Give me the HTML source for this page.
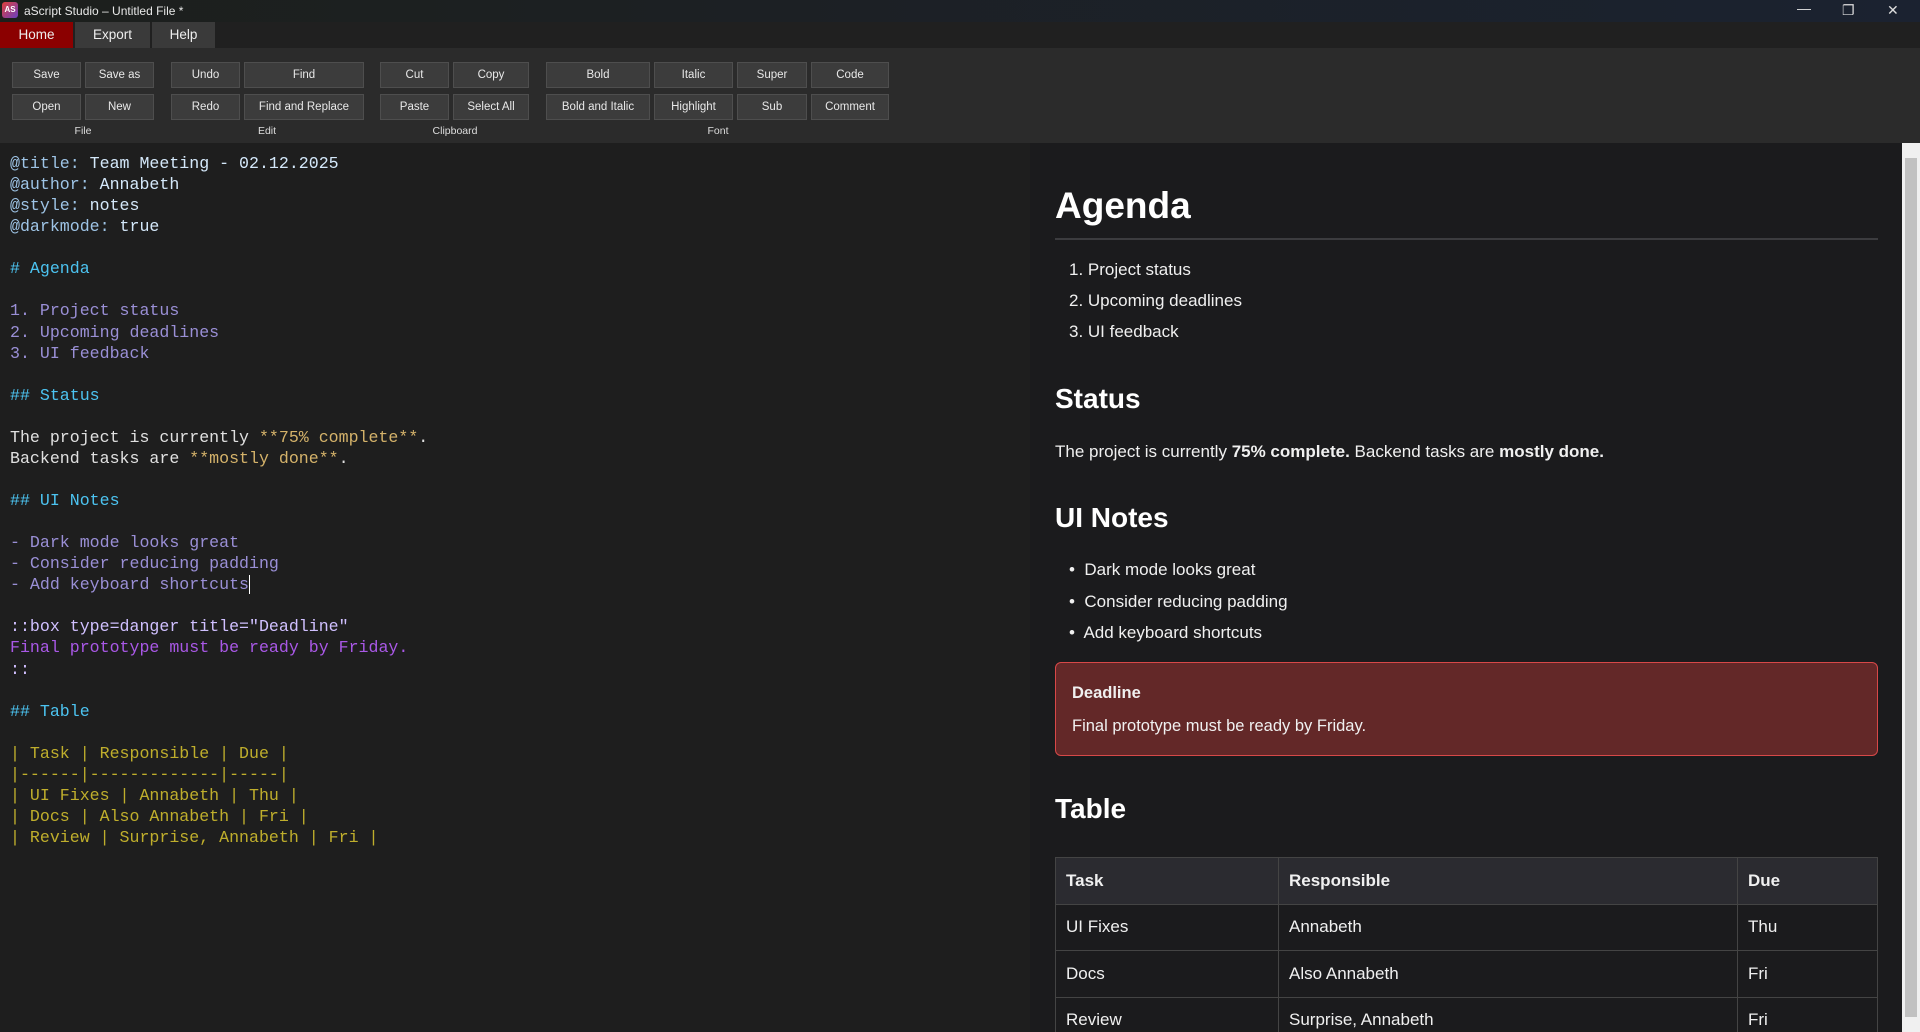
<!DOCTYPE html>
<html style="overflow:hidden;height:1032px"><head><meta charset="utf-8"><style>
*{margin:0;padding:0;box-sizing:border-box}
body{width:1920px;height:1032px;overflow:hidden;background:#1e1e1e;font-family:"Liberation Sans",sans-serif;position:relative}
.title{position:absolute;left:0;top:0;width:1920px;height:22px;background:linear-gradient(90deg,#1c1f1c,#1b2230);color:#e8e8e8;font-size:12px}
.logo{position:absolute;left:2px;top:2px;width:16px;height:16px;border-radius:3px;background:linear-gradient(135deg,#e0403a,#6a3fc0);color:#fff;font-size:8px;font-weight:bold;line-height:16px;text-align:center}
.title .t{position:absolute;left:24px;top:4px}
.wc{position:absolute;top:2px;color:#ddd;font-size:14px}
.tabs{position:absolute;top:22px;left:0;width:1920px;height:26px;background:#202020}
.tab{position:absolute;top:0;height:26px;line-height:26px;color:#eee;font-size:13.5px;text-align:center;background:#3a3a3a}
.tb{position:absolute;top:48px;left:0;width:1920px;height:95px;background:#2b2b2b}
.b{position:absolute;height:26px;background:#3c3c3c;border:1px solid #4e4e4e;color:#e8e8e8;font-size:11.5px;text-align:center;line-height:24px}
.lbl{position:absolute;top:77px;color:#ddd;font-size:10.5px;transform:translateX(-50%)}
.ed{position:absolute;left:10px;top:153px;font-family:"Liberation Mono",monospace;font-size:16.6px;line-height:21.06px;white-space:pre;color:#e0e0e0}
.k{color:#9ec4e6}.v{color:#d4e8fa}.h{color:#4cc3f0}.l{color:#9a8fd6}.g{color:#d4b26a}.bx{color:#d0c0ff}.p{color:#a958e6}.y{color:#bfae2c}
.pv{position:absolute;left:1030px;top:143px;width:872px;height:889px;background:#1b1b1d;color:#f0f0f0;overflow:hidden}
.sb{position:absolute;left:1902px;top:143px;width:18px;height:889px;background:#f0f0f0}
.sb i{position:absolute;left:3px;top:15px;width:12px;bottom:15px;background:#c1c1c1}
.a{position:absolute;font-size:17px}
h1,h2{position:absolute;font-weight:bold;color:#fff}
.box{position:absolute;left:25px;top:519px;width:823px;height:94px;background:#632828;border:1.5px solid #d84848;border-radius:6px}
table{position:absolute;left:25px;top:714px;width:823px;border-collapse:collapse;font-size:17px}
td,th{border:1.5px solid #444;height:46.5px;padding:0 10px;text-align:left}
th{background:#2b2b30}
</style></head><body>
<div class="title"><div class="logo">AS</div><span class="t">aScript Studio – Untitled File *</span>
<span class="wc" style="left:1797px;top:0">—</span><span class="wc" style="left:1842px">❐</span><span class="wc" style="left:1887px">✕</span></div>
<div class="tabs"><div class="tab" style="left:0;width:73px;background:#8b0000">Home</div><div class="tab" style="left:75px;width:75px">Export</div><div class="tab" style="left:152px;width:63px">Help</div></div>
<div class="tb">
<div class="b" style="left:12px;top:14px;width:69px">Save</div><div class="b" style="left:85px;top:14px;width:69px">Save as</div>
<div class="b" style="left:12px;top:46px;width:69px">Open</div><div class="b" style="left:85px;top:46px;width:69px">New</div>
<div class="b" style="left:171px;top:14px;width:69px">Undo</div><div class="b" style="left:244px;top:14px;width:120px">Find</div>
<div class="b" style="left:171px;top:46px;width:69px">Redo</div><div class="b" style="left:244px;top:46px;width:120px">Find and Replace</div>
<div class="b" style="left:380px;top:14px;width:69px">Cut</div><div class="b" style="left:453px;top:14px;width:76px">Copy</div>
<div class="b" style="left:380px;top:46px;width:69px">Paste</div><div class="b" style="left:453px;top:46px;width:76px">Select All</div>
<div class="b" style="left:546px;top:14px;width:104px">Bold</div><div class="b" style="left:654px;top:14px;width:79px">Italic</div><div class="b" style="left:737px;top:14px;width:70px">Super</div><div class="b" style="left:811px;top:14px;width:78px">Code</div>
<div class="b" style="left:546px;top:46px;width:104px">Bold and Italic</div><div class="b" style="left:654px;top:46px;width:79px">Highlight</div><div class="b" style="left:737px;top:46px;width:70px">Sub</div><div class="b" style="left:811px;top:46px;width:78px">Comment</div>
<span class="lbl" style="left:83px">File</span><span class="lbl" style="left:267px">Edit</span><span class="lbl" style="left:455px">Clipboard</span><span class="lbl" style="left:718px">Font</span>
</div>
<div class="ed"><span class="k">@title:</span><span class="v"> Team Meeting - 02.12.2025</span>
<span class="k">@author:</span><span class="v"> Annabeth</span>
<span class="k">@style:</span><span class="v"> notes</span>
<span class="k">@darkmode:</span><span class="v"> true</span>

<span class="h"># Agenda</span>

<span class="l">1. Project status
2. Upcoming deadlines
3. UI feedback</span>

<span class="h">## Status</span>

The project is currently <span class="g">**75% complete**</span>.
Backend tasks are <span class="g">**mostly done**</span>.

<span class="h">## UI Notes</span>

<span class="l">- Dark mode looks great
- Consider reducing padding
- Add keyboard shortcuts</span><span style="border-left:1px solid #fff"></span>

<span class="bx">::box type=danger title="Deadline"</span>
<span class="p">Final prototype must be ready by Friday.</span>
<span class="bx">::</span>

<span class="h">## Table</span>

<span class="y">| Task | Responsible | Due |
|------|-------------|-----|
| UI Fixes | Annabeth | Thu |
| Docs | Also Annabeth | Fri |
| Review | Surprise, Annabeth | Fri |</span></div>
<div class="pv">
<h1 style="left:25px;top:42px;font-size:37px">Agenda</h1>
<div style="position:absolute;left:25px;top:95px;width:823px;height:2px;background:#3c3c3f"></div>
<div class="a" style="left:39px;top:117px">1. Project status</div>
<div class="a" style="left:39px;top:148px">2. Upcoming deadlines</div>
<div class="a" style="left:39px;top:179px">3. UI feedback</div>
<h2 style="left:25px;top:240px;font-size:28px">Status</h2>
<div class="a" style="left:25px;top:299px">The project is currently <b>75% complete.</b> Backend tasks are <b>mostly done.</b></div>
<h2 style="left:25px;top:359px;font-size:28px">UI Notes</h2>
<div class="a" style="left:39px;top:417px">•&nbsp; Dark mode looks great</div>
<div class="a" style="left:39px;top:449px">•&nbsp; Consider reducing padding</div>
<div class="a" style="left:39px;top:480px">•&nbsp; Add keyboard shortcuts</div>
<div class="box"><div class="a" style="left:16px;top:21px;font-weight:bold;font-size:16.5px">Deadline</div><div class="a" style="left:16px;top:54px;font-size:16.5px">Final prototype must be ready by Friday.</div></div>
<h2 style="left:25px;top:650px;font-size:28px">Table</h2>
<table><tr><th style="width:223px">Task</th><th style="width:459px">Responsible</th><th>Due</th></tr>
<tr><td>UI Fixes</td><td>Annabeth</td><td>Thu</td></tr>
<tr><td>Docs</td><td>Also Annabeth</td><td>Fri</td></tr>
<tr><td style="height:60px;vertical-align:top;padding-top:12px">Review</td><td style="vertical-align:top;padding-top:12px">Surprise, Annabeth</td><td style="vertical-align:top;padding-top:12px">Fri</td></tr></table>
</div>
<div class="sb"><i></i></div>
</body></html>
